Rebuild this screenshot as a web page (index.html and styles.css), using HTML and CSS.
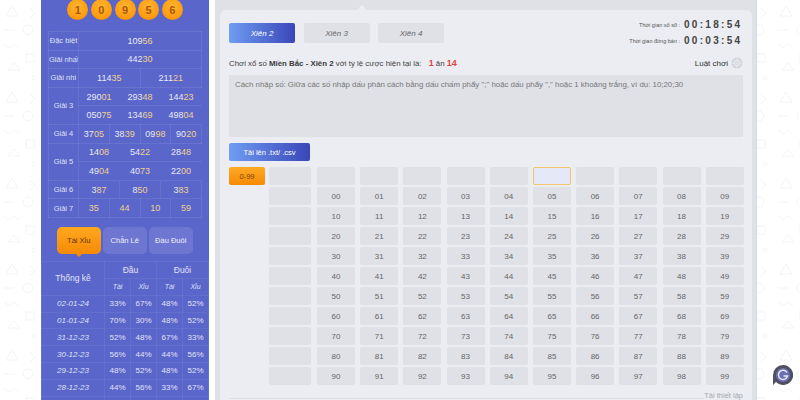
FILE: index.html
```html
<!DOCTYPE html>
<html lang="vi">
<head>
<meta charset="utf-8">
<title>Xiên 2</title>
<link rel="stylesheet" href="styles.css">
</head>
<body>
<svg class="doodles" width="800" height="400" aria-hidden="true">
  <defs>
    <pattern id="dd" width="43" height="86" patternUnits="userSpaceOnUse">
      <g fill="none" stroke="#f3f4f7" stroke-width="1">
        <path d="M6 16l6-10 6 10z"/>
        <circle cx="28" cy="30" r="5"/>
        <path d="M4 44l5 4 5-4 5 4"/>
        <rect x="26" y="54" width="8" height="8"/>
        <path d="M8 70l6-7 6 7z"/>
        <path d="M30 8l5 5-5 5"/>
        <path d="M4 30h10"/>
        <circle cx="34" cy="78" r="2"/>
      </g>
    </pattern>
  </defs>
  <rect width="800" height="400" fill="url(#dd)"/>
</svg>
<div class="page">
  <aside class="side">
    <div class="balls">
      <span class="ball">1</span><span class="ball">0</span><span class="ball">9</span><span class="ball">5</span><span class="ball">6</span>
    </div>
    <table class="results">
      <colgroup><col class="c-label"><col><col><col><col><col><col><col><col><col><col><col><col></colgroup>
      <tr><th>Đặc biệt</th><td colspan="12" class="big">109<b>56</b></td></tr>
      <tr><th>Giải nhất</th><td colspan="12" class="big">442<b>30</b></td></tr>
      <tr><th>Giải nhì</th><td colspan="6">114<b>35</b></td><td colspan="6">211<b>21</b></td></tr>
      <tr><th rowspan="2">Giải 3</th><td colspan="4">290<b>01</b></td><td colspan="4">293<b>48</b></td><td colspan="4">144<b>23</b></td></tr>
      <tr><td colspan="4">050<b>75</b></td><td colspan="4">134<b>69</b></td><td colspan="4">498<b>04</b></td></tr>
      <tr><th>Giải 4</th><td colspan="3">37<b>05</b></td><td colspan="3">38<b>39</b></td><td colspan="3">09<b>98</b></td><td colspan="3">90<b>20</b></td></tr>
      <tr><th rowspan="2">Giải 5</th><td colspan="4">14<b>08</b></td><td colspan="4">54<b>22</b></td><td colspan="4">28<b>48</b></td></tr>
      <tr><td colspan="4">49<b>04</b></td><td colspan="4">40<b>73</b></td><td colspan="4">22<b>00</b></td></tr>
      <tr><th>Giải 6</th><td colspan="4">3<b>87</b></td><td colspan="4">8<b>50</b></td><td colspan="4">3<b>83</b></td></tr>
      <tr><th>Giải 7</th><td colspan="3"><b>35</b></td><td colspan="3"><b>44</b></td><td colspan="3"><b>10</b></td><td colspan="3"><b>59</b></td></tr>
    </table>
    <div class="modes">
      <span class="mode active">Tài Xỉu</span>
      <span class="mode">Chẵn Lẻ</span>
      <span class="mode">Đầu Đuôi</span>
    </div>
    <table class="stats">
      <colgroup><col class="s-date"><col><col><col><col></colgroup>
      <tr class="s-head"><th rowspan="2" class="s-title">Thống kê</th><th colspan="2">Đầu</th><th colspan="2">Đuôi</th></tr>
      <tr class="s-sub"><th>Tài</th><th>Xỉu</th><th>Tài</th><th>Xỉu</th></tr>
      <tr><td class="d">02-01-24</td><td>33%</td><td>67%</td><td>48%</td><td>52%</td></tr>
      <tr><td class="d">01-01-24</td><td>70%</td><td>30%</td><td>48%</td><td>52%</td></tr>
      <tr><td class="d">31-12-23</td><td>52%</td><td>48%</td><td>67%</td><td>33%</td></tr>
      <tr><td class="d">30-12-23</td><td>56%</td><td>44%</td><td>44%</td><td>56%</td></tr>
      <tr><td class="d">29-12-23</td><td>48%</td><td>52%</td><td>48%</td><td>52%</td></tr>
      <tr><td class="d">28-12-23</td><td>44%</td><td>56%</td><td>33%</td><td>67%</td></tr>
      <tr><td class="d"></td><td></td><td></td><td></td><td></td></tr>
    </table>
  </aside>
  <main class="main">
    <section class="card">
      <div class="top">
        <div class="tabs">
          <span class="tab on">Xiên 2</span>
          <span class="tab">Xiên 3</span>
          <span class="tab">Xiên 4</span>
        </div>
        <div class="timers">
          <div class="timer"><span class="t-label">Thời gian xổ số :</span><span class="t-val">00:18:54</span></div>
          <div class="timer"><span class="t-label">Thời gian đóng bán :</span><span class="t-val">00:03:54</span></div>
        </div>
      </div>
      <div class="info">
        <p class="rate">Chơi xổ số <strong>Miền Bắc - Xiên 2</strong> với tỷ lệ cược hiện tại là: <span class="odds"><em>1</em> ăn <em>14</em></span></p>
        <span class="rules">Luật chơi
          <svg class="rules-ic" width="12" height="12" viewBox="0 0 12 12"><circle cx="6" cy="6" r="5.5" fill="#d2d4d9"/><circle cx="6" cy="6" r="3" fill="none" stroke="#eceef2"/><path d="M6 0v12M0 6h12" stroke="#eceef2" stroke-width=".7"/></svg>
        </span>
      </div>
      <div class="note">Cách nhập số: Giữa các số nhập dấu phân cách bằng dấu chấm phẩy ";" hoặc dấu phẩy "," hoặc 1 khoảng trắng, ví dụ: 10;20;30</div>
      <span class="upload">Tải lên .txt/ .csv</span>
      <div class="picker">
        <div class="p-range"><span class="range">0-99</span></div>
        <div class="p-spare">
          <i></i><i></i><i></i><i></i><i></i><i></i><i></i><i></i><i></i><i></i><i></i>
        </div>
        <div class="p-grid">
          <i></i><i></i><i></i><i></i><i></i><i class="sel"></i><i></i><i></i><i></i><i></i>
          <i>00</i><i>01</i><i>02</i><i>03</i><i>04</i><i>05</i><i>06</i><i>07</i><i>08</i><i>09</i>
          <i>10</i><i>11</i><i>12</i><i>13</i><i>14</i><i>15</i><i>16</i><i>17</i><i>18</i><i>19</i>
          <i>20</i><i>21</i><i>22</i><i>23</i><i>24</i><i>25</i><i>26</i><i>27</i><i>28</i><i>29</i>
          <i>30</i><i>31</i><i>32</i><i>33</i><i>34</i><i>35</i><i>36</i><i>37</i><i>38</i><i>39</i>
          <i>40</i><i>41</i><i>42</i><i>43</i><i>44</i><i>45</i><i>46</i><i>47</i><i>48</i><i>49</i>
          <i>50</i><i>51</i><i>52</i><i>53</i><i>54</i><i>55</i><i>56</i><i>57</i><i>58</i><i>59</i>
          <i>60</i><i>61</i><i>62</i><i>63</i><i>64</i><i>65</i><i>66</i><i>67</i><i>68</i><i>69</i>
          <i>70</i><i>71</i><i>72</i><i>73</i><i>74</i><i>75</i><i>76</i><i>77</i><i>78</i><i>79</i>
          <i>80</i><i>81</i><i>82</i><i>83</i><i>84</i><i>85</i><i>86</i><i>87</i><i>88</i><i>89</i>
          <i>90</i><i>91</i><i>92</i><i>93</i><i>94</i><i>95</i><i>96</i><i>97</i><i>98</i><i>99</i>
        </div>
      </div>
      <div class="foot"><span class="foot-line"></span><span class="reset">Tải thiết lập</span></div>
    </section>
  </main>
</div>
<div class="chat">
  <svg width="20" height="20" viewBox="0 0 20 20"><path d="M10 0a10 10 0 1 1-7 17l-3 3V10A10 10 0 0 1 10 0z" fill="#4f5160"/><circle cx="10" cy="10" r="7" fill="#6b6fb5"/><path d="M14 7.500A4.600 4.600 0 1 0 14.500 11H10.500" fill="none" stroke="#e6e6f5" stroke-width="1.500"/></svg>
</div>
</body>
</html>
```
FILE: styles.css
```css
* { box-sizing: border-box; }
html, body { margin: 0; height: 400px; overflow: hidden; background: #fff; }
body { font-family: "Liberation Sans", Arial, sans-serif; color: #444; }
.doodles { position: absolute; left: 0; top: 0; }
.page { position: relative; display: flex; gap: 6px; height: 400px; padding-left: 41px; overflow: hidden; }

/* Sidebar */
.side { width: 168px; flex: none; height: 400px; background: #5a66ca; overflow: hidden; }
.balls { display: flex; justify-content: center; gap: 2.600px; height: 31px; }
.ball {
  width: 21px; height: 21px; margin-top: -1px; border-radius: 50%;
  background: radial-gradient(circle at 50% 35%, #ffb52e 0%, #ff9d12 60%, #f18a06 100%);
  color: #a8580f; font-size: 11px; font-weight: 700;
  display: flex; align-items: center; justify-content: center;
}
.results { width: 154px; margin: 0 7px; border-collapse: collapse; table-layout: fixed; }
.c-label { width: 30px; }
.results th, .results td { height: 18.600px; padding: 0; text-align: center; border: 1px solid rgba(255,255,255,.08); font-weight: 400; white-space: nowrap; overflow: hidden; }
.results tr:nth-child(4) td, .results tr:nth-child(5) td, .results tr:nth-child(7) td, .results tr:nth-child(8) td { border-left-color: transparent; border-right-color: transparent; }
.results th { font-size: 7.500px; color: #dfe2f6; }
.results td { font-size: 9px; color: #e6e9f9; }
.results b { font-weight: 400; color: #f0d08e; }
.modes { display: flex; gap: 2.500px; padding: 9.500px 0 0 16px; height: 43px; }
.mode {
  position: relative; width: 43.500px; height: 27px; border-radius: 5px;
  background: #6d77d2; color: #edeffb; font-size: 7.500px;
  display: flex; align-items: center; justify-content: center;
}
.mode.active { background: linear-gradient(#ffa81f, #f58a05); color: #5e350a; }
.mode.active::after {
  content: ""; position: absolute; left: 50%; bottom: -3px; margin-left: -3px;
  border-left: 3px solid transparent; border-right: 3px solid transparent; border-top: 3px solid #f58a05;
}
.stats { width: 168px; border-collapse: collapse; table-layout: fixed; color: #e0e3f8; }
.s-date { width: 63px; }
.stats th, .stats td { padding: 0; text-align: center; font-weight: 400; height: 16.800px; border: 1px solid rgba(255,255,255,.06); font-size: 8px; }
.stats tr:first-child th { height: 17px; font-size: 8.500px; }
.stats .s-title { font-size: 9.500px; }
.stats .s-sub th { font-style: italic; font-size: 7px; color: #dfe2f6; }
.stats td.d { font-style: italic; font-size: 8px; color: #dfe2f6; }

/* Main */
.main { width: 542px; flex: none; height: 400px; padding: 10px 4px 0 5px; background: #dfe1e6; border-right: 1px solid #d4dbe8; }
.card { position: relative; height: 400px; padding: 13px 9px 0; background: #ebedf2; border-radius: 6px 6px 0 0; }
.card::before {
  content: ""; position: absolute; top: -5px; left: 137px;
  border-left: 5px solid transparent; border-right: 5px solid transparent; border-bottom: 5px solid #ebedf2;
}
.top { display: flex; justify-content: space-between; height: 31px; }
.tabs { display: flex; gap: 8.500px; height: 20px; }
.tab {
  width: 66px; height: 20px; border-radius: 2px; background: #dfe1e6; color: #666;
  font-size: 8px; font-style: italic;
  display: flex; align-items: center; justify-content: center;
}
.tab.on { background: linear-gradient(90deg, #6f9df2, #3a46b8); color: #fff; }
.timers { display: flex; flex-direction: column; gap: 3px; margin-top: -5px; padding-right: 1px; }
.timer { display: flex; align-items: center; justify-content: flex-end; height: 13px; }
.t-label { font-size: 5.500px; color: #555; margin-right: 4px; }
.t-val { width: 58px; font-size: 10px; font-weight: 700; color: #444; letter-spacing: 2.300px; white-space: nowrap; }
.info { display: flex; justify-content: space-between; align-items: center; height: 18px; margin-bottom: 3px; }
.rate { margin: 0; font-size: 7.850px; color: #444; white-space: nowrap; }
.rate strong { color: #3a3a3a; }
.odds { margin-left: 5px; }
.odds em { font-style: normal; font-weight: 700; font-size: 9px; color: #e0443c; }
.rules { display: flex; align-items: center; gap: 3px; font-size: 8px; color: #333; }
.rules-ic { display: block; }
.note { height: 62px; padding: 5px 6px; background: #dfe1e6; font-size: 7.870px; color: #777; }
.upload {
  display: flex; align-items: center; justify-content: center;
  width: 81px; height: 18px; margin-top: 6px; border-radius: 2px;
  background: linear-gradient(90deg, #6f9df2, #3a46b8); color: #fff; font-size: 7.500px;
}
.picker { display: flex; margin-top: 6px; }
.p-range { width: 40px; flex: none; }
.range {
  display: flex; align-items: center; justify-content: center;
  width: 36px; height: 18px; border-radius: 2px;
  background: linear-gradient(#ffaa24, #f58a05); color: #7a4a10; font-size: 7.500px;
}
.p-spare { width: 42px; margin-right: 6px; flex: none; display: grid; grid-auto-rows: 18px; row-gap: 2px; }
.p-grid { display: grid; grid-template-columns: repeat(10, 38px); grid-auto-rows: 18px; gap: 2px 5.200px; }
.p-spare i, .p-grid i {
  display: flex; align-items: center; justify-content: center;
  border-radius: 2px; background: #dfe1e6; font-style: normal; font-size: 8px; color: #666;
}
.p-grid i.sel { background: #e5e8f6; border: 1px solid #f0c66a; }
.foot { display: flex; gap: 0; height: 9px; margin-top: 6px; }
.foot-line { flex: 1; height: 1px; margin-top: 7px; background: #dfe1e6; }
.reset { font-size: 7.500px; line-height: 9px; color: #a5a7ad; }

/* Chat bubble */
.chat { position: absolute; left: 773px; top: 365px; width: 20px; height: 20px; }
.chat svg { display: block; }
```
